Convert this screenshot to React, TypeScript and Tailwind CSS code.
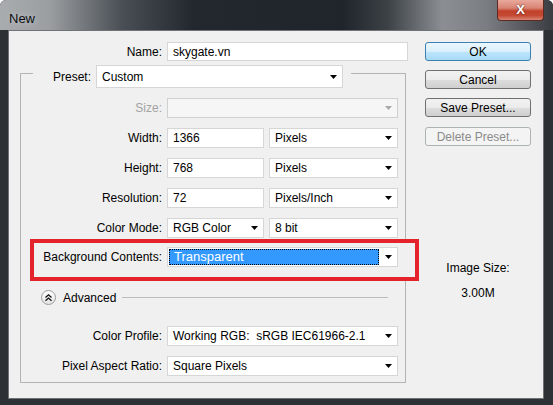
import type { ReactNode } from 'react';

function Arrow({ muted = false }: { muted?: boolean }) {
  return (
    <svg width="7" height="4" viewBox="0 0 7 4" className="shrink-0">
      <polygon points="0,0 7,0 3.5,4" fill={muted ? '#a8a8a8' : '#000'} />
    </svg>
  );
}

function Select({
  value,
  className = '',
  disabled = false,
  highlight = false,
}: {
  value?: string;
  className?: string;
  disabled?: boolean;
  highlight?: boolean;
}) {
  return (
    <div
      className={`flex items-center border ${
        disabled ? 'border-[#d0d0d0] bg-[#f6f6f6]' : 'border-[#d6d6d6] bg-white'
      } ${className}`}
    >
      {highlight ? (
        <div className="ml-px flex h-[16px] flex-1 items-center border border-dotted border-black bg-[#3399ff] pl-[4px] text-white">
          {value}
        </div>
      ) : (
        <div className="flex-1 truncate whitespace-pre pl-[5px]">{value}</div>
      )}
      <div className="flex w-[18px] justify-center">
        <Arrow muted={disabled} />
      </div>
    </div>
  );
}

function Input({ value, className = '' }: { value: string; className?: string }) {
  return (
    <div className={`flex items-center border border-[#d6d6d6] bg-white pl-[5px] ${className}`}>{value}</div>
  );
}

function Row({ label, muted = false, className = '', children }: { label: string; muted?: boolean; className?: string; children: ReactNode }) {
  return (
    <div className={`flex h-[20px] items-center ${className}`}>
      <div className={`w-[141px] text-right ${muted ? 'text-[#a3a3a3]' : ''}`}>{label}</div>
      <div className="ml-[5px] flex gap-[5px]">{children}</div>
    </div>
  );
}

function Button({ label, primary = false, disabled = false, className = '' }: { label: string; primary?: boolean; disabled?: boolean; className?: string }) {
  const look = primary
    ? 'border-[#3c7fb1] bg-[linear-gradient(180deg,#eaf6fd_0%,#d9f0fc_50%,#bee6fd_51%,#a7d9f5_100%)]'
    : disabled
      ? 'border-[#adb2b5] bg-[#f4f4f4] text-[#8b8b8b]'
      : 'border-[#707070] bg-[linear-gradient(180deg,#f2f2f2_0%,#ebebeb_50%,#dddddd_51%,#cfcfcf_100%)]';
  return (
    <div className={`flex h-[19px] w-[106px] items-center justify-center rounded-[3px] border ${look} ${className}`}>
      {label}
    </div>
  );
}

export default function App() {
  return (
    <div className="flex h-[405px] w-[553px] flex-col overflow-hidden rounded-t-[6px] bg-[#2d3135] font-['Liberation_Sans',Arial,sans-serif] text-[12px] text-black">
      {/* title bar */}
      <div className="flex h-[30px] shrink-0 items-start bg-[linear-gradient(90deg,#a8acaf_0%,#9a9ea1_9%,#4a4f55_22%,#22282e_35%,#1f252b_62%,#3c4146_70%,#8b8f93_80%,#7a7e82_88%,#3a3e42_100%)]">
        <span className="ml-[9px] mt-[9px] text-[13px] text-[#0c0e10] [text-shadow:0_0_6px_#c8cbce]">New</span>
        <div className="ml-auto mr-[9px] flex h-[21px] w-[47px] items-center justify-center rounded-b-[4px] border border-t-0 border-[#5b2a22] bg-[linear-gradient(180deg,#e9a99c_0%,#d88474_40%,#c2412b_55%,#c44a34_78%,#d98676_100%)] text-[13px] font-bold text-white [text-shadow:0_0_2px_#4a140c]">
          X
        </div>
      </div>

      {/* frame + client */}
      <div className="flex flex-1 pb-[6px] pl-[8px] pr-[9px]">
        <div className="flex flex-1 border border-[#6f7378] bg-[#f0f0f0] pl-[11px] pt-[11px]">
          {/* left column */}
          <div className="flex w-[399px] flex-col">
            <div className="flex h-[19px] items-center">
              <div className="w-[142px] text-right">Name:</div>
              <Input value="skygate.vn" className="ml-[5px] h-[19px] w-[241px]" />
            </div>

            {/* preset group */}
            <div className="mt-[4px] flex h-[23px] w-[386px]">
              <div className="mt-[8px] w-[13px] border-l border-t border-[#b4b4b4]" />
              <div className="flex w-[58px] items-center justify-end">Preset:</div>
              <Select value="Custom" className="ml-[5px] h-[23px] w-[247px]" />
              <div className="ml-[8px] mt-[8px] flex-1 border-r border-t border-[#b4b4b4]" />
            </div>
            <div className="flex w-[386px] flex-col border-x border-b border-[#b4b4b4] pb-[6px] pt-[10px]">
              <Row label="Size:" muted>
                <Select disabled className="h-[20px] w-[231px]" />
              </Row>
              <Row label="Width:" className="mt-[10px]">
                <Input value="1366" className="h-[20px] w-[97px]" />
                <Select value="Pixels" className="h-[20px] w-[129px]" />
              </Row>
              <Row label="Height:" className="mt-[10px]">
                <Input value="768" className="h-[20px] w-[97px]" />
                <Select value="Pixels" className="h-[20px] w-[129px]" />
              </Row>
              <Row label="Resolution:" className="mt-[10px]">
                <Input value="72" className="h-[20px] w-[97px]" />
                <Select value="Pixels/Inch" className="h-[20px] w-[129px]" />
              </Row>
              <Row label="Color Mode:" className="mt-[10px]">
                <Select value="RGB Color" className="h-[20px] w-[97px]" />
                <Select value="8 bit" className="h-[20px] w-[129px]" />
              </Row>

              <div className="ml-[9px] mt-[1px] flex h-[42px] w-[389px] shrink-0 items-start border-4 border-[#e3222b] bg-[#f0f0f0] pt-[4px]">
                <div className="w-[128px] text-right leading-[20px]">Background Contents:</div>
                <Select value="Transparent" highlight className="ml-[5px] h-[20px] w-[231px] text-[13px]" />
              </div>

              <div className="mt-[9px] flex h-[15px] items-center">
                <div className="ml-[20px] flex h-[15px] w-[15px] items-center justify-center rounded-full border border-[#9c9c9c] bg-[linear-gradient(180deg,#ffffff_0%,#e4e4e4_100%)]">
                  <svg width="9" height="9" viewBox="0 0 9 9">
                    <path d="M1.5 4.5 L4.5 1.8 L7.5 4.5 M1.5 7.8 L4.5 5.1 L7.5 7.8" fill="none" stroke="#111" strokeWidth="1.3" />
                  </svg>
                </div>
                <span className="ml-[7px]">Advanced</span>
                <div className="ml-[6px] mr-[17px] h-px flex-1 bg-[#bcbcbc]" />
              </div>

              <Row label="Color Profile:" className="mt-[21px]">
                <Select value="Working RGB:  sRGB IEC61966-2.1" className="h-[20px] w-[231px]" />
              </Row>
              <Row label="Pixel Aspect Ratio:" className="mt-[10px]">
                <Select value="Square Pixels" className="h-[20px] w-[231px]" />
              </Row>
            </div>
          </div>

          {/* right column */}
          <div className="ml-[6px] flex w-[106px] flex-col items-center">
            <Button label="OK" primary />
            <Button label="Cancel" className="mt-[9px]" />
            <Button label="Save Preset..." className="mt-[9px]" />
            <Button label="Delete Preset..." disabled className="mt-[10px]" />
            <div className="mt-[115px] leading-[14px]">Image Size:</div>
            <div className="mt-[11px] leading-[14px]">3.00M</div>
          </div>
        </div>
      </div>
    </div>
  );
}
